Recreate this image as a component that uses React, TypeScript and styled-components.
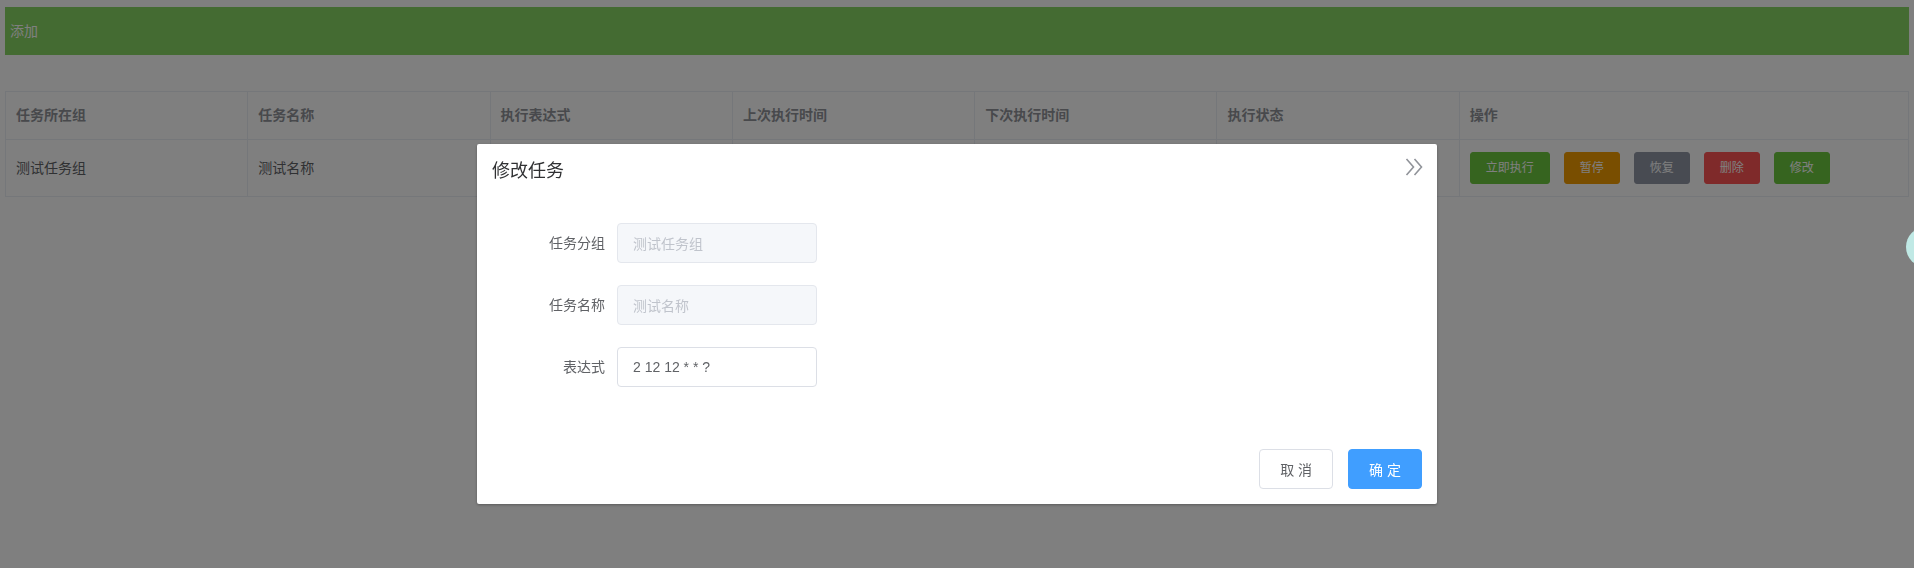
import React from "react";
import styled, { createGlobalStyle } from "styled-components";

const GlobalStyle = createGlobalStyle`
  html, body {
    margin: 0;
    padding: 0;
    background: #ffffff;
    font-family: "Liberation Sans", "Noto Sans CJK SC", sans-serif;
    font-size: 14px;
    color: #606266;
  }
  * { box-sizing: border-box; }
`;

const Page = styled.div`
  padding: 7px 5px 0;
`;

const AddBar = styled.div`
  height: 48px;
  line-height: 48px;
  padding-left: 5px;
  background: #88d664;
  color: #ffffff;
  font-size: 14px;
`;

const Table = styled.table`
  margin-top: 36px;
  width: 100%;
  table-layout: fixed;
  border-collapse: collapse;
  border: 1px solid #ebeef5;
`;

const HeadCell = styled.th`
  border: 1px solid #ebeef5;
  padding: 12px 10px;
  line-height: 23px;
  text-align: left;
  font-weight: bold;
  font-size: 14px;
  color: #909399;
`;

const Cell = styled.td`
  border: 1px solid #ebeef5;
  padding: 12px 10px;
  line-height: 23px;
  height: 57px;
  font-size: 14px;
  font-weight: normal;
  color: #606266;
  white-space: nowrap;
  overflow: hidden;
`;

const Actions = styled.div`
  display: flex;
  gap: 14px;
`;

const SmallButton = styled.button<{ $bg: string }>`
  height: 32px;
  padding: 0 15px;
  border: 1px solid ${(p) => p.$bg};
  border-radius: 3px;
  background: ${(p) => p.$bg};
  color: #ffffff;
  font-family: inherit;
  font-size: 12px;
  line-height: 1;
  cursor: pointer;
`;

const Mask = styled.div`
  position: fixed;
  inset: 0;
  background: rgba(0, 0, 0, 0.5);
  z-index: 10;
`;

const DialogWrap = styled.div`
  position: fixed;
  inset: 0;
  z-index: 11;
  overflow: auto;
`;

const Dialog = styled.div`
  position: relative;
  width: 960px;
  margin: 144px auto 0;
  background: #ffffff;
  border-radius: 2px;
  box-shadow: 0 1px 3px rgba(0, 0, 0, 0.3);
`;

const DialogHeader = styled.div`
  padding: 15px 15px 10px;
`;

const DialogTitle = styled.span`
  font-size: 18px;
  line-height: 24px;
  color: #303133;
`;

const CloseButton = styled.button`
  position: absolute;
  top: 14px;
  right: 14px;
  width: 18px;
  height: 18px;
  padding: 0;
  border: none;
  background: transparent;
  display: flex;
  cursor: pointer;
`;

const DialogBody = styled.div`
  padding: 30px 20px;
`;

const FormItem = styled.div`
  display: flex;
  margin-bottom: 22px;
`;

const Label = styled.label`
  width: 120px;
  padding-right: 12px;
  text-align: right;
  line-height: 40px;
  font-size: 14px;
  color: #606266;
`;

const Input = styled.input`
  width: 200px;
  height: 40px;
  padding: 0 15px;
  border-radius: 4px;
  border: 1px solid #dcdfe6;
  background: #ffffff;
  color: #606266;
  font-family: inherit;
  font-size: 14px;
  outline: none;
  &:disabled {
    background: #f5f7fa;
    border-color: #e4e7ed;
    color: #c0c4cc;
  }
`;

const DialogFooter = styled.div`
  display: flex;
  justify-content: flex-end;
  gap: 15px;
  padding: 10px 15px 15px;
`;

const FooterButton = styled.button<{ $primary?: boolean }>`
  height: 40px;
  padding: 0 20px;
  border-radius: 4px;
  border: 1px solid ${(p) => (p.$primary ? "#409eff" : "#dcdfe6")};
  background: ${(p) => (p.$primary ? "#409eff" : "#ffffff")};
  color: ${(p) => (p.$primary ? "#ffffff" : "#606266")};
  font-family: inherit;
  font-size: 14px;
  cursor: pointer;
  white-space: pre;
`;

const FloatBall = styled.div`
  position: fixed;
  top: 227px;
  left: 1906px;
  width: 40px;
  height: 40px;
  border-radius: 50%;
  background: #c0e9e5;
  z-index: 20;
`;

const columns = [
  "任务所在组",
  "任务名称",
  "执行表达式",
  "上次执行时间",
  "下次执行时间",
  "执行状态",
  "操作",
];

const actions = [
  { text: "立即执行", bg: "#6cc83e" },
  { text: "暂停", bg: "#f39c00" },
  { text: "恢复", bg: "#9096a4" },
  { text: "删除", bg: "#fe5454" },
  { text: "修改", bg: "#6cc83e" },
];

function CloseIcon() {
  return (
    <svg width="18" height="18" viewBox="0 0 18 18" fill="none">
      <polyline points="1.5,1 8.5,9 1.5,17" stroke="#909399" strokeWidth="1.6" />
      <polyline points="9.5,1 16.5,9 9.5,17" stroke="#909399" strokeWidth="1.6" />
    </svg>
  );
}

export default function App() {
  return (
    <>
      <GlobalStyle />
      <Page>
        <AddBar>添加</AddBar>
        <Table>
          <colgroup>
            {columns.map((c, i) => (
              <col key={c} style={i < 6 ? { width: "242.3px" } : undefined} />
            ))}
          </colgroup>
          <thead>
            <tr>
              {columns.map((c) => (
                <HeadCell key={c}>{c}</HeadCell>
              ))}
            </tr>
          </thead>
          <tbody>
            <tr>
              <Cell>测试任务组</Cell>
              <Cell>测试名称</Cell>
              <Cell></Cell>
              <Cell></Cell>
              <Cell></Cell>
              <Cell></Cell>
              <Cell>
                <Actions>
                  {actions.map((a) => (
                    <SmallButton key={a.text} $bg={a.bg}>
                      {a.text}
                    </SmallButton>
                  ))}
                </Actions>
              </Cell>
            </tr>
          </tbody>
        </Table>
      </Page>
      <Mask />
      <DialogWrap>
        <Dialog>
          <DialogHeader>
            <DialogTitle>修改任务</DialogTitle>
            <CloseButton aria-label="close">
              <CloseIcon />
            </CloseButton>
          </DialogHeader>
          <DialogBody>
            <FormItem>
              <Label>任务分组</Label>
              <Input disabled value="测试任务组" readOnly />
            </FormItem>
            <FormItem>
              <Label>任务名称</Label>
              <Input disabled value="测试名称" readOnly />
            </FormItem>
            <FormItem>
              <Label>表达式</Label>
              <Input defaultValue="2 12 12 * * ?" />
            </FormItem>
          </DialogBody>
          <DialogFooter>
            <FooterButton>取 消</FooterButton>
            <FooterButton $primary>确 定</FooterButton>
          </DialogFooter>
        </Dialog>
      </DialogWrap>
      <FloatBall />
    </>
  );
}
